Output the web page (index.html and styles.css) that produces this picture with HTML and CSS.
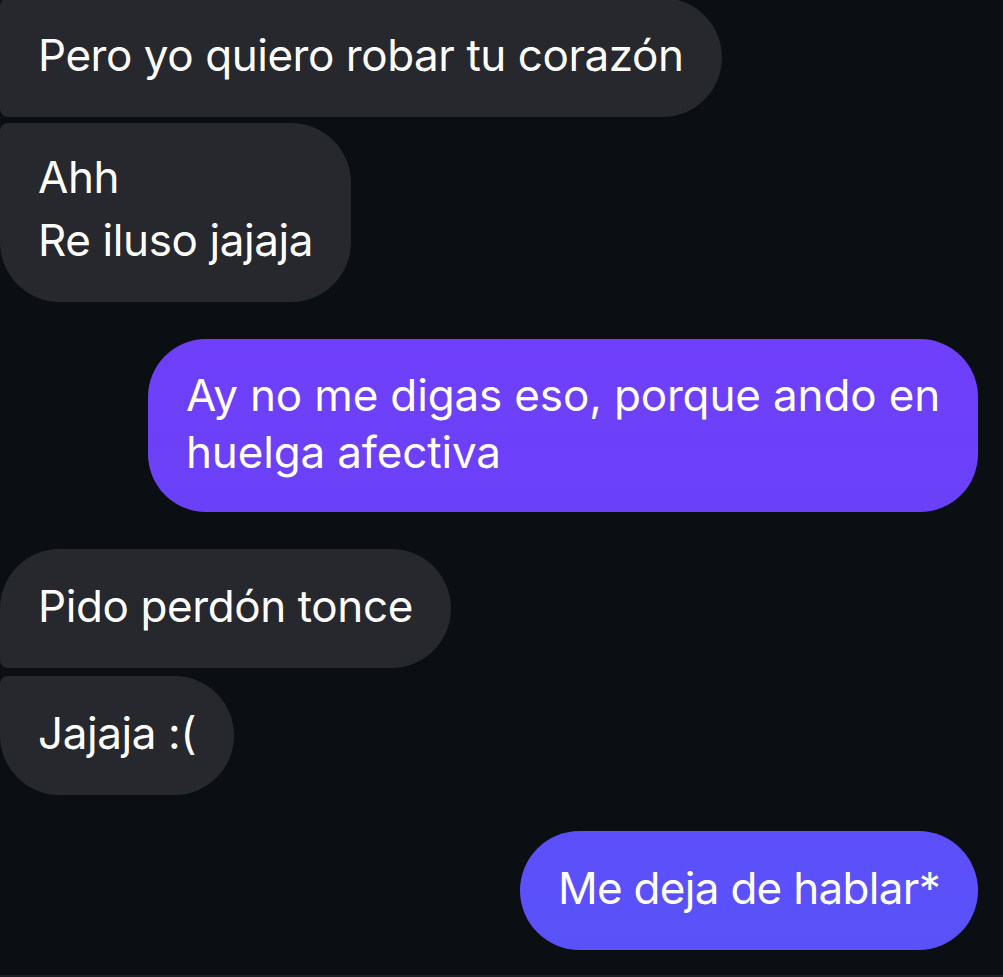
FILE: index.html
```html
<!DOCTYPE html>
<html lang="es">
<head>
<meta charset="utf-8">
<title>Chat</title>
<link rel="stylesheet" href="styles.css">
</head>
<body>
<div class="chat">
	<div class="msg them first-cut">Pero yo quiero robar tu corazón</div>
	<div class="msg them last two">Ahh<br>Re iluso jajaja</div>

	<div class="msg me purple">Ay no me digas eso, porque ando en<br>huelga afectiva</div>

	<div class="msg them first">Pido perdón tonce</div>
	<div class="msg them last">Jajaja :(</div>

	<div class="msg me blue">Me deja de hablar*</div>
</div>
</body>
</html>
```

FILE: styles.css
```css
*{ margin:0; padding:0; box-sizing:border-box;}
html,body{ background:#0b0f13; height:100%;}
body{ font-family:Inter, "Noto Sans", sans-serif; color:#fff; overflow:hidden;}

.chat{ display:flex; flex-direction:column; height:977px; border-bottom:2px solid #1b1e22;}

.msg{ font-size:44px; line-height:57px; padding:29px 38px 33px; letter-spacing:-0.4px; white-space:nowrap;}
.them{ align-self:flex-start; background:#26282d; border-radius:60px;}
.me{ align-self:flex-end; margin-right:25px; border-radius:58px;}

.first-cut{ margin-top:-2px; border-radius:8px 60px 60px 8px; letter-spacing:-0.45px;}
.first{ margin-top:37px; border-radius:60px 60px 60px 8px;}
.last{ margin-top:8px; border-radius:8px 60px 60px 60px;}
.two{ margin-top:6px; line-height:63px; padding:23px 38px 30px;}

.purple{ margin-top:37px; background:linear-gradient(#6f3ffa,#6a41f8); padding:28px 38px 31px; letter-spacing:-0.15px;}
.blue{ margin-top:36px; background:linear-gradient(#5c4ffa,#5a52f9); border-radius:60px; letter-spacing:-0.7px;}
```
